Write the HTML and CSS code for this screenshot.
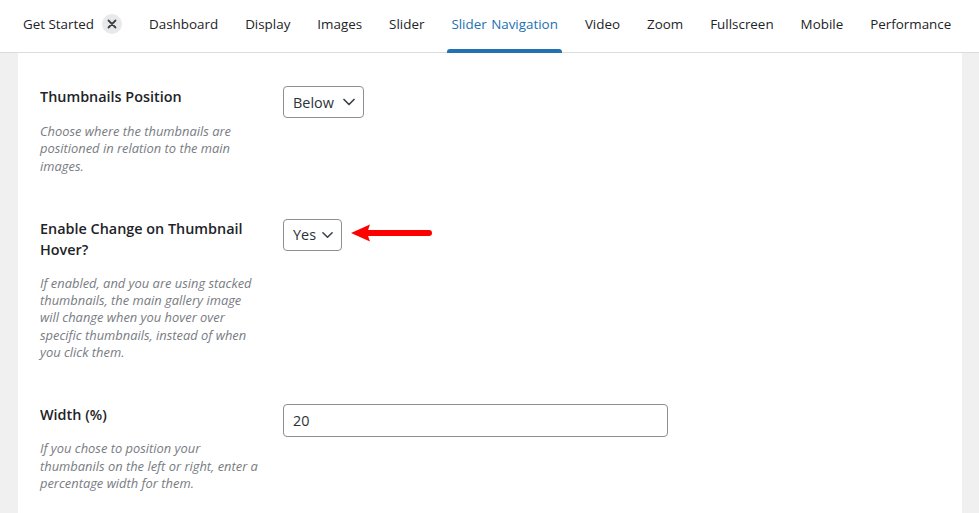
FILE: index.html
```html
<!DOCTYPE html>
<html lang="en">
<head>
<meta charset="utf-8">
<title>Slider Navigation</title>
<link rel="stylesheet" href="styles.css">
</head>
<body>
<nav class="tabs">
  <div class="tab tab-getstarted">Get Started <span class="close"><svg width="10" height="10" viewBox="0 0 10 10"><path d="M1.5 1.5 L8.5 8.5 M8.5 1.5 L1.5 8.5" stroke="#3c434a" stroke-width="1.8" stroke-linecap="round"/></svg></span></div>
  <div class="tab">Dashboard</div>
  <div class="tab">Display</div>
  <div class="tab">Images</div>
  <div class="tab">Slider</div>
  <div class="tab active">Slider Navigation</div>
  <div class="tab">Video</div>
  <div class="tab">Zoom</div>
  <div class="tab">Fullscreen</div>
  <div class="tab">Mobile</div>
  <div class="tab">Performance</div>
</nav>
<main class="panel">
  <section class="row row-1">
    <div class="th">
      <div class="label">Thumbnails Position</div>
      <p class="desc">Choose where the thumbnails are positioned in relation to the main images.</p>
    </div>
    <div class="td">
      <div class="select select-below"><span>Below</span><svg class="chev" width="12" height="8" viewBox="0 0 12 8"><path d="M1 1.5 L6 6.5 L11 1.5" fill="none" stroke="#3c434a" stroke-width="1.7" stroke-linecap="round" stroke-linejoin="round"/></svg></div>
    </div>
  </section>
  <section class="row row-2">
    <div class="th">
      <div class="label">Enable Change on Thumbnail Hover?</div>
      <p class="desc">If enabled, and you are using stacked thumbnails, the main gallery image will change when you hover over specific thumbnails, instead of when you click them.</p>
    </div>
    <div class="td td-arrow">
      <div class="select select-yes"><span>Yes</span><svg class="chev" width="12" height="8" viewBox="0 0 12 8"><path d="M1 1.5 L6 6.5 L11 1.5" fill="none" stroke="#3c434a" stroke-width="1.7" stroke-linecap="round" stroke-linejoin="round"/></svg></div>
      <svg class="arrow" width="82" height="18" viewBox="0 0 82 18"><path d="M0 9 L19 0.5 L16 9 L19 17.5 Z" fill="#ff0000"/><path d="M16 9 L78 9" stroke="#ff0000" stroke-width="6" stroke-linecap="round"/></svg>
    </div>
  </section>
  <section class="row row-3">
    <div class="th">
      <div class="label">Width (%)</div>
      <p class="desc">If you chose to position your thumbanils on the left or right, enter a percentage width for them.</p>
    </div>
    <div class="td">
      <div class="input">20</div>
    </div>
  </section>
</main>
</body>
</html>
```

FILE: styles.css
```css
html, body {
  margin: 0;
  padding: 0;
}
body {
  background: #f0f0f1;
  font-family: "Open Sans", "Noto Sans", sans-serif;
  color: #1d2327;
  width: 979px;
  height: 513px;
  overflow: hidden;
}
.tabs {
  display: flex;
  align-items: stretch;
  background: #fff;
  border-bottom: 1px solid #dcdcde;
  padding-left: 19px;
  box-sizing: border-box;
  height: 53px;
}
.tab {
  display: flex;
  align-items: center;
  padding: 0 4px 4px;
  margin-right: 19px;
  font-size: 13.4px;
  color: #1d2327;
  position: relative;
  white-space: nowrap;
}
.close {
  display: inline-flex;
  align-items: center;
  justify-content: center;
  width: 20px;
  height: 20px;
  border-radius: 50%;
  background: #e9e9ea;
  margin-left: 8px;
}
.tab.active {
  color: #2271b1;
  word-spacing: 1px;
}
.tab.active::after {
  content: "";
  position: absolute;
  left: 0;
  right: 0;
  bottom: -1px;
  height: 4px;
  background: #2271b1;
  border-radius: 3px 3px 0 0;
}
.panel {
  background: #fff;
  margin: 0 17px 0 18px;
  padding: 34px 22px 0;
  height: 460px;
  box-sizing: border-box;
}
.row {
  display: grid;
  grid-template-columns: 243px 1fr;
}
.row-1 { margin-bottom: 43px; }
.row-2 { margin-bottom: 43px; }
.label {
  font-size: 14.4px;
  font-weight: 600;
  line-height: 21px;
  width: 220px;
}
.row-1 .label { margin-top: -1px; }
.desc {
  margin: 15px 0 0;
  font-size: 12.9px;
  font-style: italic;
  line-height: 17.3px;
  color: #787c82;
  width: 222px;
}
.row-1 .desc { margin-top: 16px; }
.td {
  display: flex;
  align-items: flex-start;
}
.select {
  display: flex;
  align-items: center;
  height: 32px;
  margin-top: -1px;
  box-sizing: border-box;
  border: 1px solid #8c8f94;
  border-radius: 4px;
  padding: 0 8px 0 9px;
  font-size: 14.4px;
  color: #2c3338;
}
.select span {
  margin-right: 9px;
}
.select-below { width: 81px; }
.select-yes { width: 59px; margin-top: 1px; }
.select-yes span { margin-right: 6px; }
.arrow {
  margin-left: 9px;
  margin-top: 6px;
}
.input {
  width: 385px;
  height: 33px;
  box-sizing: border-box;
  border: 1px solid #8c8f94;
  border-radius: 4px;
  padding: 0 9px;
  display: flex;
  align-items: center;
  font-size: 14.4px;
  color: #2c3338;
}
```
